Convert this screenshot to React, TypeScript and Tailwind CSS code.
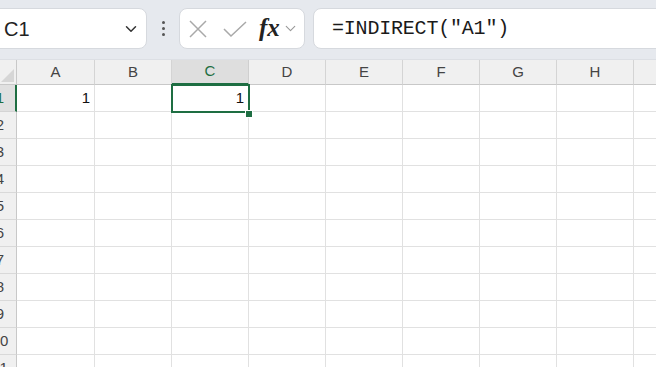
import { ChevronDown } from "lucide-react";

const COLS = ["A", "B", "C", "D", "E", "F", "G", "H", "I"];
const COL_W = [78, 77, 77, 77, 77, 77, 77, 77, 77];
const ROWS = [1, 2, 3, 4, 5, 6, 7, 8, 9, 10, 11];

function Toolbar() {
  return (
    <div className="h-[60px] bg-[#e6e9ee] flex items-start pt-2 border-b border-[#dcdfe4]">
      {/* name box */}
      <div className="ml-[-8px] w-[155px] h-[41px] shrink-0 rounded-lg bg-white border border-[#d6d9de] flex items-center pl-[11px] pr-[6px]">
        <span className="flex-1 text-[20px] text-[#222] font-['Liberation_Sans',sans-serif]">C1</span>
        <ChevronDown size={18} strokeWidth={2} className="text-[#333]" />
      </div>
      {/* more */}
      <div className="w-[32px] h-[41px] shrink-0 flex flex-col items-center justify-center gap-[3px]">
        <span className="w-[3px] h-[3px] rounded-full bg-[#555]" />
        <span className="w-[3px] h-[3px] rounded-full bg-[#555]" />
        <span className="w-[3px] h-[3px] rounded-full bg-[#555]" />
      </div>
      {/* fx box */}
      <div className="w-[126px] h-[41px] shrink-0 rounded-lg bg-white border border-[#d6d9de] flex items-center pl-[8px]">
        <svg width="20" height="20" viewBox="0 0 20 20" className="shrink-0">
          <path d="M2 2 L18 18 M18 2 L2 18" stroke="#a9a9a9" strokeWidth="1.5" fill="none" />
        </svg>
        <svg width="26" height="20" viewBox="0 0 26 20" className="ml-[14px] shrink-0">
          <path d="M2 10 L9 17 L24 3" stroke="#a9a9a9" strokeWidth="1.5" fill="none" />
        </svg>
        <span className="ml-[11px] text-[25px] italic font-bold font-['Liberation_Serif',serif] text-[#222] leading-none pb-[2px]">fx</span>
        <ChevronDown size={17} strokeWidth={1.6} className="ml-[2px] text-[#999]" />
      </div>
      {/* formula bar */}
      <div className="ml-[8px] w-[360px] h-[41px] shrink-0 rounded-lg bg-white border border-[#d6d9de] flex items-center pl-[18px]">
        <span className="text-[20px] text-[#1a1a1a] font-['Liberation_Mono',monospace] tracking-[-0.2px]">=INDIRECT("A1")</span>
      </div>
    </div>
  );
}

function ColHeader() {
  return (
    <div className="flex h-[25px] font-['Liberation_Sans',sans-serif]">
      <div className="relative w-[17px] shrink-0 bg-[#f0f0f0] border-r border-b border-[#c8c8c8]">
        <svg width="13" height="13" viewBox="0 0 13 13" className="absolute right-[2px] bottom-[2px]">
          <path d="M13 0 L13 13 L0 13 Z" fill="#d6d6d6" />
        </svg>
      </div>
      {COLS.map((c, i) => {
        const sel = c === "C";
        return (
          <div
            key={c}
            style={{ width: COL_W[i] }}
            className={
              sel
                ? "shrink-0 flex items-center justify-center text-[15px] bg-[#dedede] text-[#1e6e42] border-r border-[#cfcfcf] border-b-2 border-b-[#1e6e42]"
                : "shrink-0 flex items-center justify-center text-[15px] bg-[#f0f0f0] text-[#444] border-r border-b border-[#d4d4d4] border-b-[#c8c8c8]"
            }
          >
            {c}
          </div>
        );
      })}
    </div>
  );
}

function Row({ n }: { n: number }) {
  const sel = n === 1;
  return (
    <div className="flex h-[27px] font-['Liberation_Sans',sans-serif]">
      <div
        className={
          sel
            ? "w-[17px] shrink-0 overflow-hidden bg-[#e0e0e0] border-r-2 border-[#1e6e42] border-b border-b-[#d4d4d4] flex items-center"
            : "w-[17px] shrink-0 overflow-hidden bg-[#f0f0f0] border-r border-b border-[#c8c8c8] border-b-[#d9d9d9] flex items-center"
        }
      >
        <span className={sel ? "ml-[-13px] w-[26px] shrink-0 text-center text-[15px] text-[#1e6e42]" : "ml-[-13px] w-[26px] shrink-0 text-center text-[15px] text-[#444]"}>{n}</span>
      </div>
      {COLS.map((c, i) => (
        <div
          key={c}
          style={{ width: COL_W[i] }}
          className="shrink-0 border-r border-b border-[#e1e1e1] flex items-center justify-end pr-[4px] text-[15px] text-[#111]"
        >
          {n === 1 && (c === "A" || c === "C") ? "1" : ""}
        </div>
      ))}
    </div>
  );
}

export default function App() {
  return (
    <div className="w-[656px] h-[367px] overflow-hidden bg-white">
      <Toolbar />
      <div className="relative">
        <ColHeader />
        {ROWS.map((n) => (
          <Row key={n} n={n} />
        ))}
        {/* active cell C1 */}
        <div className="absolute left-[171px] top-[24px] w-[79px] h-[29px] border-2 border-[#1e6e42] pointer-events-none" />
        <div className="absolute left-[245px] top-[50px] w-[6px] h-[6px] bg-[#1e6e42] border border-white box-content" />
      </div>
    </div>
  );
}
